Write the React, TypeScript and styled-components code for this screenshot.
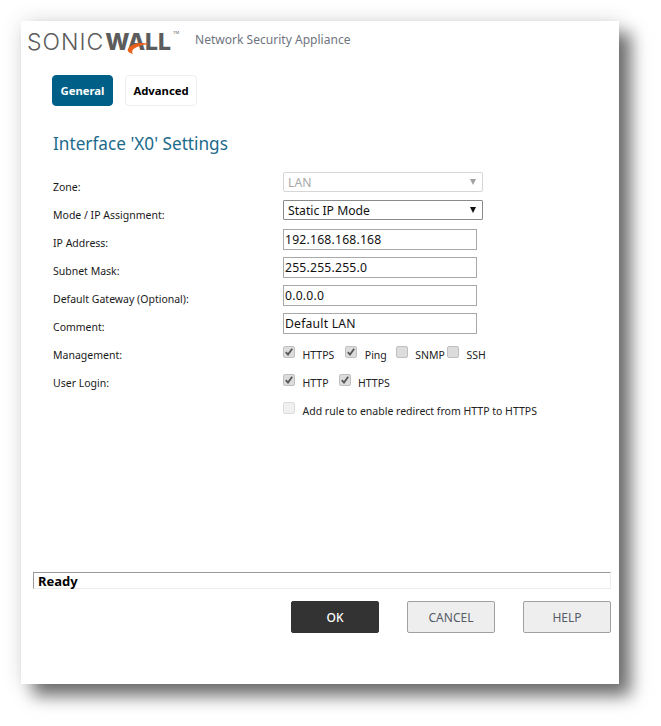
import styled, { createGlobalStyle } from "styled-components";

const GlobalStyle = createGlobalStyle`
  html, body {
    margin: 0;
    padding: 0;
    background: #fff;
  }
  body {
    font-family: "Noto Sans", "DejaVu Sans", sans-serif;
    overflow: hidden;
  }
`;

const Page = styled.div`
  width: 661px;
  height: 726px;
  padding: 21px 0 0 21px;
  box-sizing: border-box;
`;

const Dialog = styled.div`
  width: 598px;
  height: 663px;
  background: #fff;
  display: flex;
  flex-direction: column;
  box-shadow: 12px 12px 16px rgba(0, 0, 0, 0.55), 0 0 20px rgba(0, 0, 0, 0.12);
`;

const Header = styled.header`
  display: flex;
  align-items: center;
  height: 38px;
  padding: 0 0 0 6px;
`;

const Logo = styled.div`
  position: relative;
  display: flex;
  width: 150px;
  margin-top: 4px;
  font-family: Inter, "Liberation Sans", sans-serif;
  font-size: 23px;
  line-height: 30px;
  color: #5c5c5c;
`;

const LogoLight = styled.span`
  font-weight: 300;
  letter-spacing: 1px;
  margin-right: 1px;
`;

const LogoBold = styled.span`
  font-weight: 800;
  letter-spacing: -0.2px;
`;

const LogoMark = styled.svg`
  position: absolute;
  left: 99px;
  top: 13px;
`;

const LogoTm = styled.span`
  position: absolute;
  left: 146px;
  top: 3px;
  font-size: 4px;
  line-height: 6px;
`;

const Product = styled.div`
  margin: -2px 0 0 18px;
  font-size: 12.05px;
  color: #6f7480;
`;

const Tabs = styled.nav`
  display: flex;
  gap: 12px;
  margin: 16px 0 0 31px;
`;

const Tab = styled.div<{ $active?: boolean }>`
  height: 31px;
  box-sizing: border-box;
  display: flex;
  align-items: center;
  justify-content: center;
  width: ${(p) => (p.$active ? "61px" : "72px")};
  border-radius: 4px;
  font-size: 11.3px;
  font-weight: 700;
  color: ${(p) => (p.$active ? "#fff" : "#000")};
  background: ${(p) => (p.$active ? "#005f87" : "#fff")};
  border: 1px solid ${(p) => (p.$active ? "#005f87" : "#eeeeee")};
`;

const Title = styled.h1`
  margin: 25px 0 0 32px;
  font-size: 17.2px;
  line-height: 26px;
  font-weight: 400;
  color: #1c6a8c;
`;

const Form = styled.div`
  display: grid;
  grid-template-columns: 230px 1fr;
  grid-auto-rows: 28px;
  margin: 12px 0 0 32px;
  align-items: center;
  font-size: 10.5px;
  color: #1a1a1a;
`;

const Label = styled.label`
  white-space: nowrap;
  margin-top: 8px;
`;

const Select = styled.div<{ $disabled?: boolean }>`
  width: 200px;
  height: 20px;
  box-sizing: border-box;
  margin-top: -2px;
  display: flex;
  align-items: center;
  justify-content: space-between;
  padding: 0 6px 0 4px;
  font-size: 12.2px;
  background: #fff;
  color: ${(p) => (p.$disabled ? "#a8a8a8" : "#111")};
  border: 1px solid ${(p) => (p.$disabled ? "#d6d6d6" : "#8a8a8a")};
  border-radius: ${(p) => (p.$disabled ? "2px" : "1px")};
`;

const Arrow = styled.span<{ $disabled?: boolean }>`
  width: 0;
  height: 0;
  border-left: 3.5px solid transparent;
  border-right: 3.5px solid transparent;
  border-top: 6px solid ${(p) => (p.$disabled ? "#a0a0a0" : "#111")};
`;

const TextInput = styled.div`
  width: 194px;
  height: 21px;
  box-sizing: border-box;
  display: flex;
  align-items: center;
  padding-left: 1px;
  font-size: 12.2px;
  letter-spacing: 0.2px;
  color: #111;
  border: 1px solid #a9a9a9;
  background: #fff;
`;

const Checks = styled.div`
  display: flex;
  align-items: center;
  font-size: 10.5px;
  color: #222;
  margin-top: 8px;
`;

const CheckItem = styled.span<{ $gap: number }>`
  display: flex;
  align-items: center;
  margin-right: ${(p) => p.$gap}px;
  white-space: nowrap;
`;

const Box = styled.span<{ $faint?: boolean }>`
  width: 12px;
  height: 12px;
  box-sizing: border-box;
  margin: -7px 7.5px 0 0;
  display: flex;
  align-items: center;
  justify-content: center;
  border-radius: 2px;
  background: ${(p) => (p.$faint ? "#f0f0f0" : "#dcdcdc")};
  border: 1px solid ${(p) => (p.$faint ? "#dcdcdc" : "#c0c0c0")};
`;

const Status = styled.div`
  margin: auto 8px 0 12px;
  height: 17px;
  box-sizing: border-box;
  padding-left: 4px;
  display: flex;
  align-items: center;
  font-size: 13px;
  font-weight: 700;
  color: #000;
  border-style: solid;
  border-color: #999 #ececec #ececec #999;
  border-width: 1px;
`;

const Actions = styled.div`
  display: flex;
  justify-content: flex-end;
  gap: 28px;
  margin: 12px 8px 51px 0;
`;

const Button = styled.div<{ $primary?: boolean }>`
  width: 88px;
  height: 32px;
  box-sizing: border-box;
  display: flex;
  align-items: center;
  justify-content: center;
  border-radius: 2px;
  font-size: 12px;
  font-weight: ${(p) => (p.$primary ? 500 : 400)};
  color: ${(p) => (p.$primary ? "#fff" : "#555c68")};
  background: ${(p) => (p.$primary ? "#333333" : "#eeeeee")};
  border: 1px solid ${(p) => (p.$primary ? "#333333" : "#a0a0a0")};
`;

const CheckMark = () => (
  <svg width="10" height="10" viewBox="0 0 10 10">
    <path d="M1.8 5.2 L4 7.6 L8.2 1.8" fill="none" stroke="#555" strokeWidth="1.8" />
  </svg>
);

type CheckProps = { label: string; checked?: boolean; faint?: boolean; gap?: number };

const Check = ({ label, checked, faint, gap = 10 }: CheckProps) => (
  <CheckItem $gap={gap}>
    <Box $faint={faint}>{checked && <CheckMark />}</Box>
    {label}
  </CheckItem>
);

const App = () => (
  <>
    <GlobalStyle />
    <Page>
      <Dialog>
        <Header>
          <Logo>
            <LogoLight>SONIC</LogoLight>
            <LogoBold>WALL</LogoBold>
            <LogoMark width="24" height="16" viewBox="0 0 24 16">
              <path d="M23 4 C15 2 6 3 2 9 C1 11 3 13 7 14 C4 10 9 6 23 4 Z" fill="#e8601c" />
            </LogoMark>
            <LogoTm>TM</LogoTm>
          </Logo>
          <Product>Network Security Appliance</Product>
        </Header>
        <Tabs>
          <Tab $active>General</Tab>
          <Tab>Advanced</Tab>
        </Tabs>
        <Title>Interface 'X0' Settings</Title>
        <Form>
          <Label>Zone:</Label>
          <Select $disabled>
            LAN
            <Arrow $disabled />
          </Select>
          <Label>Mode / IP Assignment:</Label>
          <Select>
            Static IP Mode
            <Arrow />
          </Select>
          <Label>IP Address:</Label>
          <TextInput>192.168.168.168</TextInput>
          <Label>Subnet Mask:</Label>
          <TextInput>255.255.255.0</TextInput>
          <Label>Default Gateway (Optional):</Label>
          <TextInput>0.0.0.0</TextInput>
          <Label>Comment:</Label>
          <TextInput>Default LAN</TextInput>
          <Label>Management:</Label>
          <Checks>
            <Check label="HTTPS" checked gap={11} />
            <Check label="Ping" checked gap={9} />
            <Check label="SNMP" gap={2} />
            <Check label="SSH" />
          </Checks>
          <Label>User Login:</Label>
          <Checks>
            <Check label="HTTP" checked />
            <Check label="HTTPS" checked />
          </Checks>
          <span />
          <Checks>
            <Check label="Add rule to enable redirect from HTTP to HTTPS" faint />
          </Checks>
        </Form>
        <Status>Ready</Status>
        <Actions>
          <Button $primary>OK</Button>
          <Button>CANCEL</Button>
          <Button>HELP</Button>
        </Actions>
      </Dialog>
    </Page>
  </>
);

export default App;
